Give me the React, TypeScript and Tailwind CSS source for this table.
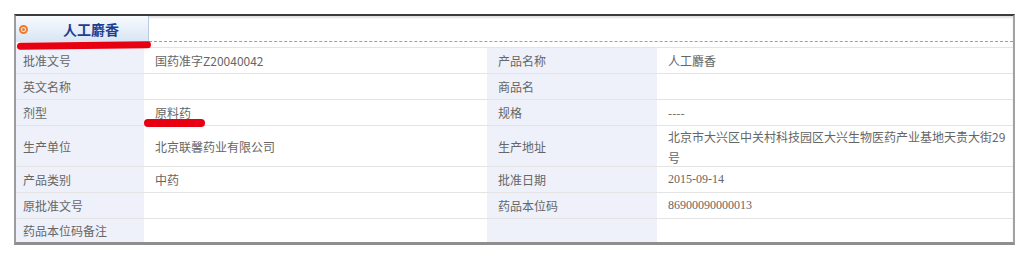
import React from "react";

type Cell = { label: string; value?: React.ReactNode; serif?: boolean };
type Row = { h: string; cells: [Cell, Cell] };

const rows: Row[] = [
  { h: "h-[26px]", cells: [{ label: "批准文号", value: "国药准字Z20040042" }, { label: "产品名称", value: "人工麝香" }] },
  { h: "h-[26px]", cells: [{ label: "英文名称" }, { label: "商品名" }] },
  { h: "h-[26px]", cells: [{ label: "剂型", value: "原料药" }, { label: "规格", value: "----" }] },
  {
    h: "h-[41px]",
    cells: [
      { label: "生产单位", value: "北京联馨药业有限公司" },
      {
        label: "生产地址",
        value: (
          <>
            北京市大兴区中关村科技园区大兴生物医药产业基地天贵大街29
            <br />号
          </>
        ),
      },
    ],
  },
  { h: "h-[26px]", cells: [{ label: "产品类别", value: "中药" }, { label: "批准日期", value: "2015-09-14", serif: true }] },
  { h: "h-[26px]", cells: [{ label: "原批准文号" }, { label: "药品本位码", value: "86900090000013", serif: true }] },
  { h: "h-[24px]", cells: [{ label: "药品本位码备注" }, { label: "" }] },
];

const font = "font-['Microsoft_YaHei','Noto_Sans_CJK_SC',sans-serif]";

export default function App() {
  return (
    <div className={`relative w-[1029px] h-[258px] bg-white pt-[14px] pl-[14px] ${font}`}>
      <div className="w-[1001px] h-[231px] border-t-2 border-t-[#3c3c3c] border-l-2 border-l-[#9c9c9c] border-r-2 border-r-[#a2a2a2] border-b-[3px] border-b-[#8e8e8e] bg-white shadow-[inset_0_2px_2px_rgba(0,0,0,0.12)] flex flex-col">
        {/* header */}
        <div className="h-[26px] flex shrink-0">
          <div className="w-[133px] h-full flex items-center bg-gradient-to-b from-[#f7fafe] to-[#d8e5f4] border-r border-r-[#b9cbe0]">
            <span className="ml-[3px] w-[9px] h-[9px] rounded-full border-2 border-[#f07a2a] flex items-center justify-center">
              <span className="w-[3px] h-[3px] rounded-full bg-[#f07a2a]" />
            </span>
            <span className="ml-[35px] text-[14px] leading-none font-bold text-[#1d3f92]">人工麝香</span>
          </div>
          <div className="flex-1 border-b border-dashed border-b-[#8fa3b8]" />
        </div>
        <div className="h-[5px] shrink-0" />
        {/* table */}
        <div className="flex flex-col text-[12px] text-[#666]">
          {rows.map((r, i) => (
            <div key={i} className={`grid grid-cols-[128px_343px_170px_357px] border-t border-t-[#e4e4e4] ${r.h}`}>
              <div className="bg-[#eef1f9] pl-[7px] flex items-center">{r.cells[0].label}</div>
              <div className="pl-[11px] flex items-center">{r.cells[0].value}</div>
              <div className="bg-[#eef1f9] pl-[11px] flex items-center">{r.cells[1].label}</div>
              <div
                className={`pl-[11px] flex items-center leading-[21px] ${
                  r.cells[1].serif ? "font-['Liberation_Serif',serif] text-[12px]" : ""
                }`}
              >
                {r.cells[1].value}
              </div>
            </div>
          ))}
        </div>
      </div>
      {/* red annotation marks */}
      <div className="absolute left-[17px] top-[42px] w-[134px] h-[7px] rounded-full bg-[#e60012] -rotate-[0.6deg]" />
      <div className="absolute left-[144px] top-[119px] w-[61px] h-[8px] rounded-full bg-[#e60012]" />
    </div>
  );
}
